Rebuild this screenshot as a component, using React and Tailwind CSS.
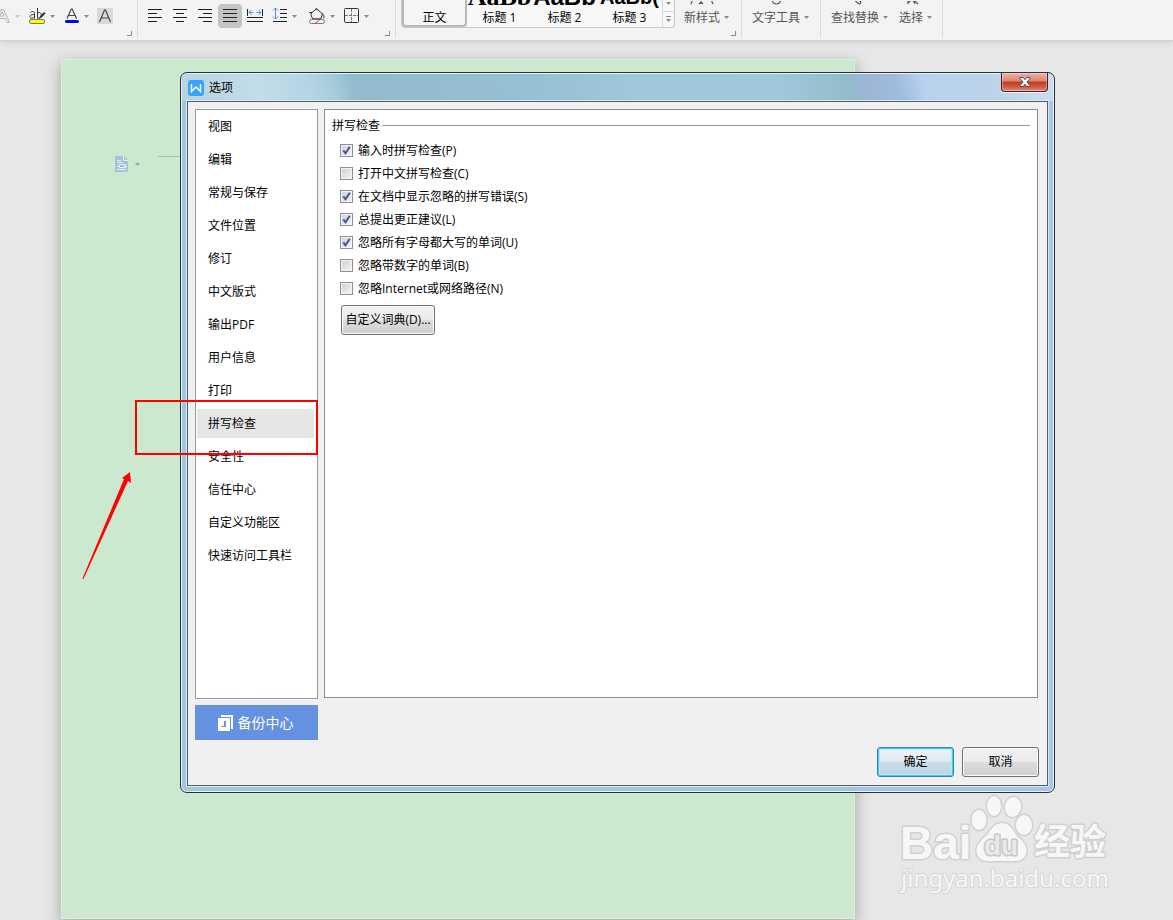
import React, { useState } from 'react';

const categories = [
  '视图', '编辑', '常规与保存', '文件位置', '修订', '中文版式', '输出PDF',
  '用户信息', '打印', '拼写检查', '安全性', '信任中心', '自定义功能区', '快速访问工具栏',
];

const spellOptions = [
  { id: 'p', label: '输入时拼写检查(P)', on: true },
  { id: 'c', label: '打开中文拼写检查(C)', on: false },
  { id: 's', label: '在文档中显示忽略的拼写错误(S)', on: true },
  { id: 'l', label: '总提出更正建议(L)', on: true },
  { id: 'u', label: '忽略所有字母都大写的单词(U)', on: true },
  { id: 'b', label: '忽略带数字的单词(B)', on: false },
  { id: 'n', label: '忽略Internet或网络路径(N)', on: false },
];

function Caret({ className = 'text-[#8a8a8a]' }) {
  return (
    <svg viewBox="0 0 5 3" className={`w-[5px] h-[3px] shrink-0 ${className}`} fill="currentColor">
      <path d="M0 0h5L2.5 3z" />
    </svg>
  );
}

function Corner() {
  return (
    <svg viewBox="0 0 5 5" className="absolute right-[5px] bottom-[2px] w-[5px] h-[5px]" fill="none" stroke="#8a8a8a">
      <path d="M4.5 0v4.5H0" />
    </svg>
  );
}

function Lines({ d }) {
  return (
    <svg viewBox="0 0 16 16" className="w-4 h-4" fill="none" stroke="#222">
      <path d={d} />
    </svg>
  );
}

function FontGroup() {
  return (
    <div className="relative flex w-[138px] shrink-0 items-start border-r border-[#dcdcdc]">
      <div className="flex h-8 items-center">
        <button aria-label="文字效果" className="flex items-center gap-1">
          <svg viewBox="0 0 11 16" className="w-[11px] h-4" fill="none" stroke="#b5b5b5">
            <path d="M-4.5 14.5L1 1.5h2.500l6 13H7L5.600 10.500H-1.200M-.5 8h4.600L2.200 3.500z" />
          </svg>
          <Caret className="text-[#c4c4c4]" />
        </button>
        <button aria-label="突出显示" className="ml-[9px] flex items-center gap-1">
          <svg viewBox="0 0 17 16" className="w-[17px] h-4" fill="none" stroke="#333">
            <path d="M1.500 4.500c1-1.500 4-1.500 4 1v5M5.500 6.500c-4 0-4.500 1-4.500 2.200 0 2 3 2 4.500 0M8.500 0v10.500M8.500 5.500c1.500-2 4-.5 4 1.700 0 3-2.500 4-4 2.300" />
            <path d="M15 4l1.500 1.500-4 4-2.500 1 1-2.500z" fill="#333" stroke="none" />
            <rect x=".5" y="11.500" width="15" height="4" rx="1.500" fill="#ffff00" stroke="#777" />
          </svg>
          <Caret />
        </button>
        <button aria-label="字体颜色" className="ml-[9px] flex items-center gap-1">
          <svg viewBox="0 0 16 16" className="w-4 h-4" fill="none" stroke="#444" strokeWidth="1.200">
            <path d="M3 10.500L7.300 1h.9l4.300 9.500M4.500 7.500h6.500" />
            <rect x="1" y="12" width="14" height="3" rx="1.500" fill="#0000ff" stroke="none" />
          </svg>
          <Caret />
        </button>
        <button aria-label="字符底纹" className="ml-2 bg-[#d9d9d9]">
          <svg viewBox="0 0 16 16" className="w-4 h-4" fill="none" stroke="#444" strokeWidth="1.200">
            <path d="M2.500 14L7.500 2h1l5 12M4.500 10h7" />
          </svg>
        </button>
      </div>
      <Corner />
    </div>
  );
}

function ParagraphGroup() {
  const alignBtn = 'flex h-6 w-[25px] items-center justify-center';
  return (
    <div className="relative w-[258px] shrink-0 border-r border-[#dcdcdc]">
      <div className="flex h-8 items-center pl-1">
        <button aria-label="左对齐" className={alignBtn}>
          <Lines d="M1 1.500h14M1 5.500h9M1 9.500h14M1 13.500h9" />
        </button>
        <button aria-label="居中对齐" className={alignBtn}>
          <Lines d="M1 1.500h14M4 5.500h8M1 9.500h14M4 13.500h8" />
        </button>
        <button aria-label="右对齐" className={alignBtn}>
          <Lines d="M1 1.500h14M6 5.500h9M1 9.500h14M6 13.500h9" />
        </button>
        <button aria-label="两端对齐" className="ml-px flex h-6 w-6 items-center justify-center rounded bg-[#c4c4c4]">
          <Lines d="M1 1.500h14M1 5.500h14M1 9.500h14M1 13.500h14" />
        </button>
        <button aria-label="分散对齐" className={alignBtn}>
          <svg viewBox="0 0 16 16" className="w-4 h-4" fill="none" stroke="#222">
            <path d="M.5 1v7M15.500 1v7M0 9.500h16M0 13.500h16" />
            <path d="M2 4.500h4.500M9.500 4.500h4.500M4.500 2l-2.500 2.500 2.500 2.500M11.500 2l2.500 2.500-2.500 2.500" stroke="#5b8fdc" />
          </svg>
        </button>
        <button aria-label="行距" className="ml-[5px] flex items-center gap-1">
          <svg viewBox="0 0 16 16" className="w-4 h-4" fill="none" stroke="#222">
            <path d="M8 1.500h7M8 5.500h7M8 9.500h7M1 13.500h14" />
            <path d="M3.500 0v11M1 2.500l2.500-2.500 2.500 2.500M1 8.500l2.500 2.500 2.500-2.500" stroke="#5b8fdc" />
          </svg>
          <Caret />
        </button>
        <button aria-label="底纹颜色" className="ml-[11px] flex items-center gap-1">
          <svg viewBox="0 0 18 16" className="w-[18px] h-4" fill="none" stroke="#333">
            <path d="M1 4.500h3M3.500 5L8.500 .8l6 5-1.500 5H4.500l-1.500-4zM8 0l1 2M14 5.500c2 1 2 3 2 5" />
            <rect x="1.500" y="11.500" width="15" height="4" rx="2" fill="#f3f3f3" stroke="#777" />
            <path d="M7 15.500l5-4" stroke="#e0403a" />
          </svg>
          <Caret />
        </button>
        <button aria-label="边框" className="ml-[9px] flex items-center gap-1">
          <svg viewBox="0 0 16 16" className="w-4 h-4" fill="none" stroke="#333">
            <rect x=".5" y=".5" width="14" height="14" rx="1" />
            <path d="M7.500 1v13M1 7.500h13" stroke="#777" strokeDasharray="3 1" />
          </svg>
          <Caret />
        </button>
      </div>
      <Corner />
    </div>
  );
}

function StyleItem({ label, sample }) {
  return (
    <button className="flex w-[65px] flex-col items-center overflow-hidden text-black">
      <span className="flex h-[9px] items-end overflow-hidden pb-1">{sample}</span>
      <span className="leading-[18px]">{label}</span>
    </button>
  );
}

function ToolButton({ label, icon, className = '' }) {
  return (
    <button className={`flex h-[27px] items-end gap-1 text-[#555] ${className}`}>
      <span className="flex flex-col items-center">
        <svg viewBox="0 0 24 8" className="w-6 h-2" fill="none" stroke="#555" strokeWidth="1.200">
          <path d={icon} />
        </svg>
        <span className="leading-[18px]">{label}</span>
      </span>
      <span className="flex h-[20px] items-center">
        <Caret />
      </span>
    </button>
  );
}

function Ribbon() {
  return (
    <header className="relative flex h-[41px] overflow-hidden border-b border-[#d2d2d2] bg-[#f3f3f3] text-xs shadow-[0_1px_6px_rgba(0,0,0,0.12)]">
      <div className="flex h-[38px] w-full">
        <FontGroup />
        <ParagraphGroup />
        <div className="relative flex w-[346px] shrink-0 items-start border-r border-[#dcdcdc] pl-[5px]">
          <div className="flex h-7 rounded-b border border-t-0 border-[#c8c8c8] bg-[#f8f8f8]">
            <button className="flex w-[65px] flex-col items-center rounded-b border-2 border-t-0 border-[#b8b8b8] bg-[#f5f5f5] text-black">
              <span className="h-[9px] shrink-0" />
              <span className="leading-[18px]">正文</span>
            </button>
            <StyleItem
              label="标题 1"
              sample={<b className="font-['Liberation_Serif'] text-[26px] leading-4">AaBb</b>}
            />
            <StyleItem
              label="标题 2"
              sample={<b className="font-['Liberation_Sans'] text-[24px] leading-4">AaBb</b>}
            />
            <StyleItem
              label="标题 3"
              sample={<b className="font-['Liberation_Sans'] text-[20px] leading-4">AaBb(</b>}
            />
            <div className="flex w-3 flex-col border-l border-[#d5d9e2]">
              <button aria-label="向下滚动" className="flex h-3 items-start justify-center border-b border-[#d5d9e2] pt-[2px]">
                <Caret />
              </button>
              <button aria-label="更多样式" className="flex h-4 items-center justify-center">
                <svg viewBox="0 0 5 6" className="h-[6px] w-[5px]" fill="#8a8a8a">
                  <path d="M0 0h5v1H0zM0 3h5L2.500 6z" />
                </svg>
              </button>
            </div>
          </div>
          <ToolButton className="ml-[9px]" label="新样式" icon="M1 3L4 -5M11 -2V3M9 3l2-2 2 2M20 -4l3 7" />
          <Corner />
        </div>
        <div className="flex w-[79px] shrink-0 items-start border-r border-[#dcdcdc] pl-[10px]">
          <ToolButton label="文字工具" icon="M8 -2c0 3 2 5 4.500 5s4-2 4-4" />
        </div>
        <div className="flex w-[122px] shrink-0 items-start border-r border-[#dcdcdc] pl-[10px]">
          <ToolButton label="查找替换" icon="M10 -2l6 5c2 0 2-2 1-3l-3-3" />
          <ToolButton className="ml-[11px]" label="选择" icon="M9 3V-2M9 2l3-3M14 -1l2 4M14 -2l5 5" />
        </div>
      </div>
    </header>
  );
}

function Option({ id, label, on }) {
  const [checked, setChecked] = useState(on);
  return (
    <label htmlFor={id} className="flex h-[23px] items-center gap-[5px]">
      <span className="grid h-[13px] w-[13px]">
        <input
          id={id}
          type="checkbox"
          checked={checked}
          onChange={(e) => setChecked(e.target.checked)}
          className="col-start-1 row-start-1 h-[13px] w-[13px] appearance-none border border-[#8e8f8f] bg-linear-to-br from-[#cbcfd5] to-[#f6f6f6] shadow-[inset_0_0_0_1px_#f4f4f4]"
        />
        {checked && (
          <svg viewBox="0 0 13 13" className="pointer-events-none col-start-1 row-start-1 h-[13px] w-[13px]" fill="none" stroke="#43579c" strokeWidth="2">
            <path d="M3.300 6.300l2.200 3L9.800 2.800" />
          </svg>
        )}
      </span>
      <span>{label}</span>
    </label>
  );
}

const buttonFace =
  'rounded-[3px] border border-[#707070] bg-[linear-gradient(#f2f2f2_0%,#ebebeb_48%,#dddddd_50%,#cfcfcf_100%)] shadow-[inset_0_0_0_1px_#fbfbfb]';

function OptionsDialog() {
  const [active, setActive] = useState('拼写检查');

  return (
    <section
      role="dialog"
      aria-label="选项"
      className="absolute top-[72px] left-[180px] w-[875px] rounded-[7px] border border-[#26323c] bg-[linear-gradient(90deg,#a0c8da_0%,#a0c8da_76%,#a6c3e4_78%,#a9c6e8_100%)] shadow-[inset_0_0_0_1px_#e4f1f8]"
    >
      <div className="mx-px mt-px flex h-[27px] justify-between rounded-t-md bg-[linear-gradient(75deg,#b6d3df_0%,#c3dde8_9%,#b4d5e3_15%,#a4cbda_18%,#93bacd_20%,#96c0d3_40%,#9fc8da_52%,#a0c9dc_68%,#93bccb_76%,#9cb6d3_78%,#9fbcde_82%,#b8d2ee_85%,#bdd3ea_93%,#cbddf3_100%)]">
        <div className="flex items-center gap-[5px] pl-[6px]">
          <svg viewBox="0 0 16 16" className="h-4 w-4">
            <rect width="16" height="16" rx="3" fill="#36a3ff" />
            <path d="M3.500 4v7.500l4.500-4.500 4.500 4.500V4" fill="none" stroke="#fff" strokeWidth="1.500" />
          </svg>
          <h1 className="text-xs text-black">选项</h1>
        </div>
        <button
          aria-label="关闭"
          className="-mt-px mr-[5px] flex h-[19px] w-[47px] items-center justify-center rounded-b border border-t-0 border-[#4c1c1c] bg-[linear-gradient(#f0b2a8_0%,#dc8272_45%,#c03a22_50%,#cf6049_80%,#e09078_100%)] shadow-[inset_0_0_0_1px_rgba(255,255,255,0.35),0_1px_0_#f2f7fc]"
        >
          <svg viewBox="0 0 12 10" className="h-[10px] w-3">
            <path d="M1 .5h3.200L6 2.700 7.800.5H11v1L8 5l3 3.500v1H7.800L6 7.300 4.200 9.500H1v-1L4 5 1 1.500z" fill="#f5f5f5" stroke="#4a5061" />
          </svg>
        </button>
      </div>

      <div className="mx-[6px] mb-[6px] border border-[#53606c] bg-[#f0f0f0] pt-[7px] pr-[8px] pb-[8px] pl-[7px] text-xs text-black shadow-[0_0_0_1px_#d8e9f2]">
        <div className="flex gap-[6px]">
          <div className="flex w-[123px] shrink-0 flex-col gap-[6px]">
            <ul className="grow border border-[#9a9a9a] bg-white pt-[2px] pr-[3px] pl-px">
              {categories.map((name) => (
                <li key={name} className="pb-1">
                  <button
                    onClick={() => setActive(name)}
                    className={`block h-[29px] w-full pl-[11px] text-left ${active === name ? 'bg-[#e6e6e6]' : ''}`}
                  >
                    {name}
                  </button>
                </li>
              ))}
            </ul>
            <button className="flex h-[35px] items-center justify-center gap-1 bg-[#6592e0] pr-[2px] text-sm text-white">
              <svg viewBox="0 0 16 16" className="h-4 w-4" fill="#fff">
                <path d="M3 0h12v14h-2V2H3z" />
                <path fillRule="evenodd" d="M0 3h12v13H0zM6 6h2v6H3v-1h3z" />
              </svg>
              备份中心
            </button>
          </div>

          <div className="mr-px mb-[42px] min-h-[589px] grow border border-[#8a8a94] bg-white pt-[6px] pr-[7px] pl-[7px]">
            <div className="flex h-[19px] items-center gap-[2px]">
              <h2>拼写检查</h2>
              <span className="h-px grow bg-[#9a9a9a]" />
            </div>
            <div className="pt-1 pl-2">
              {spellOptions.map((o) => (
                <Option key={o.id} {...o} />
              ))}
            </div>
            <button className={`mt-[5px] ml-[9px] h-[30px] w-[94px] ${buttonFace}`}>自定义词典(D)...</button>
          </div>
        </div>

        <div className="mt-[7px] flex justify-end gap-2">
          <button className="h-[30px] w-[77px] rounded-[3px] border border-[#3c7fb1] bg-[linear-gradient(#eef4f8_0%,#dfeaf1_48%,#c9dde8_50%,#bfd5e1_100%)] shadow-[inset_0_0_0_1px_#3fcdf5,inset_0_0_0_2px_#b5e9fa]">
            确定
          </button>
          <button className={`h-[30px] w-[77px] ${buttonFace}`}>取消</button>
        </div>
      </div>
    </section>
  );
}

function Watermark() {
  return (
    <svg
      viewBox="0 0 216 104"
      className="absolute top-[792px] left-[896px] h-[104px] w-[216px]"
      fill="#f7f7f7"
      stroke="#d0d0d0"
      strokeWidth="3"
      strokeLinejoin="round"
      paintOrder="stroke"
    >
      <text x="4" y="67" fontFamily="Liberation Sans" fontWeight="700" fontSize="46">Bai</text>
      <ellipse cx="83" cy="28" rx="7.500" ry="10" />
      <ellipse cx="98" cy="14" rx="7" ry="10" />
      <ellipse cx="117" cy="15" rx="8" ry="10" transform="rotate(10 117 15)" />
      <ellipse cx="128" cy="33" rx="8" ry="10" />
      <path d="M106 31c-9 0-12 9-17 14-6 5-10 10-8 17 3 9 13 7 25 7s21 2 24-7c2-7-2-12-8-17-5-5-7-14-16-14z" />
      <text x="88" y="63" fontFamily="Liberation Sans" fontWeight="700" fontSize="28" fill="#e9e9e9" strokeWidth="3" stroke="#c6c6c6">du</text>
      <text x="138" y="63" fontFamily="Noto Sans CJK SC" fontWeight="700" fontSize="36">经验</text>
      <text x="5" y="95" fontFamily="Noto Sans" fontSize="24" stroke="#d6d6d6" strokeWidth="2">jingyan.baidu.com</text>
    </svg>
  );
}

export default function App() {
  return (
    <div className="relative flex min-h-screen flex-col overflow-hidden bg-[#e7e7e7] font-['Open_Sans','Noto_Sans_CJK_SC',sans-serif]">
      <Ribbon />

      <main className="mt-[18px] mb-px ml-[61px] w-[794px] grow border border-[#dbeee0] bg-[#cce8cf] shadow-[0_5px_14px_1px_rgba(0,0,0,0.28)]">
        <div className="flex items-start pt-[96px] pl-[53px]">
          <button aria-label="段落布局" className="flex items-center gap-[6px]">
            <svg viewBox="0 0 14 16" className="h-4 w-[14px]" fill="none" stroke="#e4f2ec">
              <path d="M0 0h9l4 4v12H0z" fill="#a3c3d6" stroke="none" />
              <path d="M8.500 0v4.500H13M2 4.500h4M2 6.500h6M2 10.500h2M9 10.500h3M4.500 8.500h6v3h-6zM2 13.500h9" />
            </svg>
            <Caret className="text-[#93a79a]" />
          </button>
          <span className="ml-[18px] h-px w-10 bg-[#a9c0ac]" />
        </div>
      </main>

      <OptionsDialog />
      <Watermark />

      {/* red callout around the active category */}
      <div className="pointer-events-none absolute top-[400px] left-[135px] h-[55px] w-[183px] border-2 border-[#ff0000]" />
      <svg viewBox="0 0 52 110" className="pointer-events-none absolute top-[470px] left-[81px] h-[110px] w-[52px]" fill="#ff0000">
        <path d="M49 2l1 11-3-2L2.500 109l-1-.5L43 9l-2-1z" />
      </svg>
    </div>
  );
}
